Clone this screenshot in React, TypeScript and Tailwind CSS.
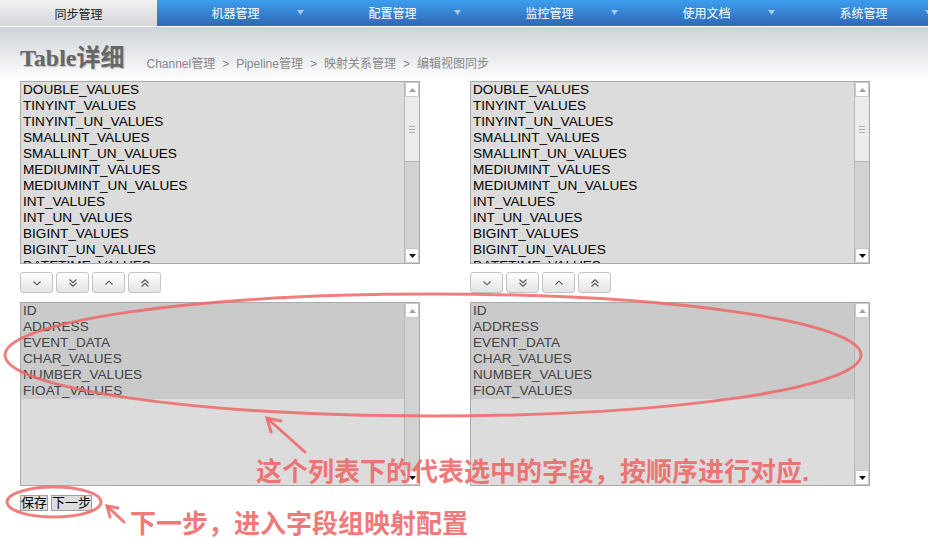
import React from "react";

const tabs = ["同步管理", "机器管理", "配置管理", "监控管理", "使用文档", "系统管理"];

const topFields = [
  "DOUBLE_VALUES",
  "TINYINT_VALUES",
  "TINYINT_UN_VALUES",
  "SMALLINT_VALUES",
  "SMALLINT_UN_VALUES",
  "MEDIUMINT_VALUES",
  "MEDIUMINT_UN_VALUES",
  "INT_VALUES",
  "INT_UN_VALUES",
  "BIGINT_VALUES",
  "BIGINT_UN_VALUES",
  "DATETIME_VALUES",
];

const pickedFields = ["ID", "ADDRESS", "EVENT_DATA", "CHAR_VALUES", "NUMBER_VALUES", "FIOAT_VALUES"];

const crumbs = ["Channel管理", "Pipeline管理", "映射关系管理", "编辑视图同步"];

const Tri = ({ up, dark }: { up?: boolean; dark?: boolean }) => (
  <svg width="7" height="4" viewBox="0 0 7 4">
    <path d={up ? "M0 4 L3.5 0 L7 4 Z" : "M0 0 L7 0 L3.5 4 Z"} fill={dark ? "#111" : "#a0a0a0"} />
  </svg>
);

const ScrollBtn = ({ up, dark }: { up?: boolean; dark?: boolean }) => (
  <div className="h-[15px] bg-white border border-[#c8c8c8] rounded-[2px] flex items-center justify-center">
    <Tri up={up} dark={dark} />
  </div>
);

// fake listbox scrollbar, like old chrome renders it
const Scrollbar = ({ thumb }: { thumb?: boolean }) => (
  <div className="w-[15px] flex flex-col bg-[#d2d2d2] border-l border-[#b8b8b8]">
    <ScrollBtn up />
    {thumb && (
      <div className="h-[65px] bg-[#ebebeb] border-b border-[#b4b4b4] flex flex-col items-center justify-center gap-[2px]">
        <div className="w-[6px] h-px bg-[#b0b0b0]" />
        <div className="w-[6px] h-px bg-[#b0b0b0]" />
        <div className="w-[6px] h-px bg-[#b0b0b0]" />
      </div>
    )}
    <div className="flex-1" />
    <ScrollBtn dark />
  </div>
);

const Chevron = ({ up, double }: { up?: boolean; double?: boolean }) => (
  <svg width="10" height="10" viewBox="0 0 10 10" fill="none" stroke="#555" strokeWidth="1.1">
    {up ? (
      <>
        <path d={double ? "M1.5 5 L5 1.8 L8.5 5" : "M1.5 6.5 L5 3.2 L8.5 6.5"} />
        {double && <path d="M1.5 8.5 L5 5.3 L8.5 8.5" />}
      </>
    ) : (
      <>
        <path d={double ? "M1.5 1.5 L5 4.7 L8.5 1.5" : "M1.5 3.5 L5 6.8 L8.5 3.5"} />
        {double && <path d="M1.5 5 L5 8.2 L8.5 5" />}
      </>
    )}
  </svg>
);

const MoveButtons = () => (
  <div className="flex gap-[3px] mt-[8px] h-[21px]">
    {[
      { up: false, double: false },
      { up: false, double: true },
      { up: true, double: false },
      { up: true, double: true },
    ].map((b, i) => (
      <div
        key={i}
        className="w-[33px] h-[21px] rounded-[3px] border border-[#c4c4c4] bg-gradient-to-b from-white to-[#e4e4e4] flex items-center justify-center"
      >
        <Chevron up={b.up} double={b.double} />
      </div>
    ))}
  </div>
);

const FieldColumn = () => (
  <div className="w-[400px] flex flex-col">
    <div className="h-[183px] border border-[#a9a9a9] bg-[#dcdcdc] flex overflow-hidden">
      <div className="flex-1 overflow-hidden pl-[2px]">
        {topFields.map((f) => (
          <div key={f} className="h-[16px] leading-[16px] text-[13.6px] text-black whitespace-nowrap">
            {f}
          </div>
        ))}
      </div>
      <Scrollbar thumb />
    </div>
    <MoveButtons />
    <div className="mt-[9px] h-[184px] border border-[#a9a9a9] bg-[#dcdcdc] flex overflow-hidden">
      <div className="flex-1 overflow-hidden">
        {pickedFields.map((f) => (
          <div key={f} className="h-[16px] leading-[16px] pl-[2px] text-[13.6px] text-[#444] bg-[#cacaca] whitespace-nowrap">
            {f}
          </div>
        ))}
      </div>
      <Scrollbar />
    </div>
  </div>
);

export default function App() {
  return (
    <div className="relative w-[928px] h-[538px] overflow-hidden bg-white font-['Liberation_Sans','Noto_Sans_CJK_SC',sans-serif]">
      {/* top nav */}
      <div className="flex h-[27px] border-b border-white overflow-hidden">
        {tabs.map((t, i) =>
          i === 0 ? (
            <div
              key={t}
              className="relative w-[157px] shrink-0 h-[27px] pt-[2px] bg-gradient-to-b from-[#f2f2f2] to-[#d2d5da] flex items-center justify-center text-[12px] text-[#222]"
            >
              {t}
            </div>
          ) : (
            <div
              key={t}
              className="relative w-[157px] shrink-0 h-[26px] pt-[2px] bg-gradient-to-b from-[#3c9eee] to-[#3068b5] flex items-center justify-center text-[12px] text-white"
            >
              {t}
              <span className="absolute right-[10px] top-[10px]">
                <svg width="7" height="5" viewBox="0 0 7 5">
                  <path d="M0 0 L7 0 L3.5 5 Z" fill="#a9c9ef" />
                </svg>
              </span>
            </div>
          )
        )}
      </div>

      {/* page header */}
      <div className="h-[54px] bg-gradient-to-b from-[#ced2d8] to-white flex items-end pl-[20px] pb-[9px]">
        <h1 className="text-[24px] leading-[28px] font-bold text-[#666] [text-shadow:1px_1px_1px_#bbb] font-['Liberation_Serif','Noto_Sans_CJK_SC',serif]">
          Table详细
        </h1>
        <div className="ml-[22px] -mb-[1px] flex text-[12px] text-[#888] whitespace-nowrap">
          {crumbs.map((c, i) => (
            <span key={c}>
              {i > 0 && <span className="mx-[7px]">&gt;</span>}
              {c}
            </span>
          ))}
        </div>
      </div>

      {/* the two field columns */}
      <div className="flex gap-[50px] px-[20px]">
        <FieldColumn />
        <FieldColumn />
      </div>

      <div className="flex gap-[3px] px-[20px] mt-[9px]">
        <button className="h-[16px] px-0 border border-[#a0a0a0] bg-[#dddddd] text-[13px] leading-[14px] text-black">保存</button>
        <button className="h-[16px] px-0 border border-[#a0a0a0] bg-[#dddddd] text-[13px] leading-[14px] text-black">下一步</button>
      </div>

      {/* red annotations */}
      <svg className="absolute inset-0 pointer-events-none" width="928" height="538">
        <g stroke="#ee6767" strokeOpacity="0.85" strokeWidth="3" fill="none" strokeLinecap="round">
          <ellipse cx="433" cy="355" rx="428" ry="61" />
          <ellipse cx="54" cy="502" rx="47" ry="15" />
          <path d="M305 452 L268 419" />
          <path d="M271 432 L267 418 L281 421" />
          <path d="M124 522 L108 507" />
          <path d="M110 517 L107 506 L118 508" />
        </g>
      </svg>
      <div className="absolute left-[256px] top-[459px] text-[26px] leading-[26px] font-bold text-[#ee6767]/90 whitespace-nowrap">
        这个列表下的代表选中的字段，按顺序进行对应.
      </div>
      <div className="absolute left-[130px] top-[511px] text-[26px] leading-[26px] font-bold text-[#ee6767]/90 whitespace-nowrap">
        下一步，进入字段组映射配置
      </div>
    </div>
  );
}
